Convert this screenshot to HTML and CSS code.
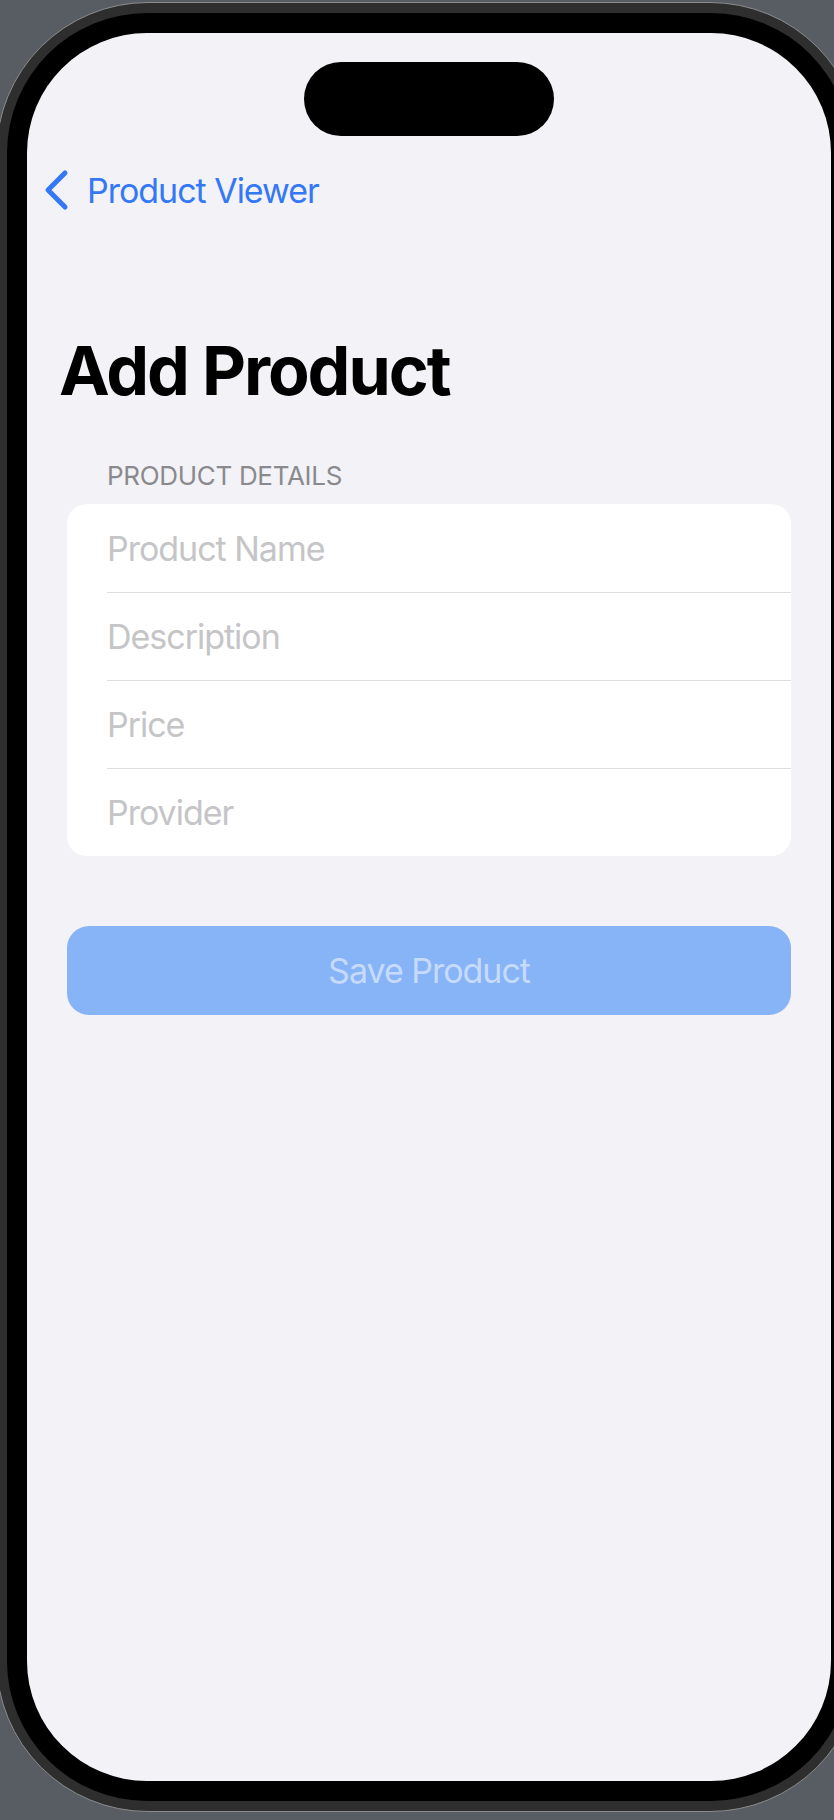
FILE: index.html
```html
<!DOCTYPE html>
<html lang="en">
<head>
<meta charset="utf-8">
<title>Add Product</title>
<link rel="stylesheet" href="styles.css">
</head>
<body>
  <div class="device">
    <div class="bezel">
      <main class="screen">
        <div class="island"></div>
        <nav class="navbar">
          <a class="back" href="#">
            <svg class="chevron" width="26" height="42" viewBox="0 0 26 42" aria-hidden="true">
              <polyline points="21,4 4,21 21,38" fill="none" stroke="currentColor" stroke-width="5" stroke-linecap="round" stroke-linejoin="round"/>
            </svg>
            <span class="back-label">Product Viewer</span>
          </a>
        </nav>
        <h1 class="title">Add Product</h1>
        <section class="form-section">
          <h2 class="section-header">PRODUCT DETAILS</h2>
          <div class="card">
            <div class="row"><div class="field"><span class="placeholder">Product Name</span></div></div>
            <div class="row"><div class="field"><span class="placeholder">Description</span></div></div>
            <div class="row"><div class="field"><span class="placeholder">Price</span></div></div>
            <div class="row"><div class="field"><span class="placeholder">Provider</span></div></div>
          </div>
        </section>
        <div class="actions">
          <button class="save" type="button" disabled>Save Product</button>
        </div>
      </main>
    </div>
  </div>
</body>
</html>
```

FILE: styles.css
```css
html, body {
  margin: 0;
  padding: 0;
  overflow: hidden;
}

body {
  background: #585c63;
  font-family: Inter, "Noto Sans", "Liberation Sans", sans-serif;
  width: 834px;
  height: 1820px;
}

.device {
  margin: 2px 0 0 -4px;
  width: 866px;
  padding: 10px;
  box-sizing: border-box;
  background: #2e2e2e;
  border: 1px solid #8c8c8c;
  border-radius: 152px;
}

.bezel {
  padding: 20px;
  background: #000;
  border-radius: 140px;
}

.screen {
  width: 804px;
  height: 1748px;
  background: #f2f2f7;
  border-radius: 120px;
  overflow: hidden;
  display: flex;
  flex-direction: column;
}

.island {
  align-self: center;
  width: 250px;
  height: 74px;
  margin-top: 29px;
  background: #000;
  border-radius: 37px;
  flex: none;
}

.navbar {
  height: 88px;
  margin-top: 10px;
  padding-left: 17px;
  display: flex;
  align-items: center;
  flex: none;
}

.back {
  display: flex;
  align-items: center;
  gap: 17px;
  color: #3478f6;
  text-decoration: none;
  font-size: 34px;
  letter-spacing: -0.03em;
}

.chevron {
  display: block;
}

.title {
  margin: 95px 0 0 0;
  padding-left: 32px;
  font-size: 68px;
  line-height: 82px;
  font-weight: 700;
  letter-spacing: -0.03em;
  color: #000;
}

.form-section {
  padding: 0 40px;
}

.section-header {
  margin: 49px 0 12px 0;
  padding-left: 40px;
  font-size: 26px;
  line-height: 32px;
  font-weight: 400;
  color: #8a8a8e;
  letter-spacing: -0.012em;
}

.card {
  background: #fff;
  border-radius: 20px;
  overflow: hidden;
}

.row {
  padding-left: 40px;
}

.field {
  height: 88px;
  box-sizing: border-box;
  display: flex;
  align-items: center;
  border-top: 1px solid #dedee0;
}

.row:first-child .field {
  border-top: none;
}

.placeholder {
  font-size: 34px;
  color: #c5c5c7;
  letter-spacing: -0.03em;
}

.actions {
  padding: 0 40px;
  margin-top: 70px;
}

.save {
  display: block;
  width: 100%;
  height: 89px;
  border: none;
  border-radius: 22px;
  background: #86b4f7;
  color: #c6dbfb;
  font-family: inherit;
  font-size: 34px;
  letter-spacing: -0.03em;
  padding: 0;
}
```
